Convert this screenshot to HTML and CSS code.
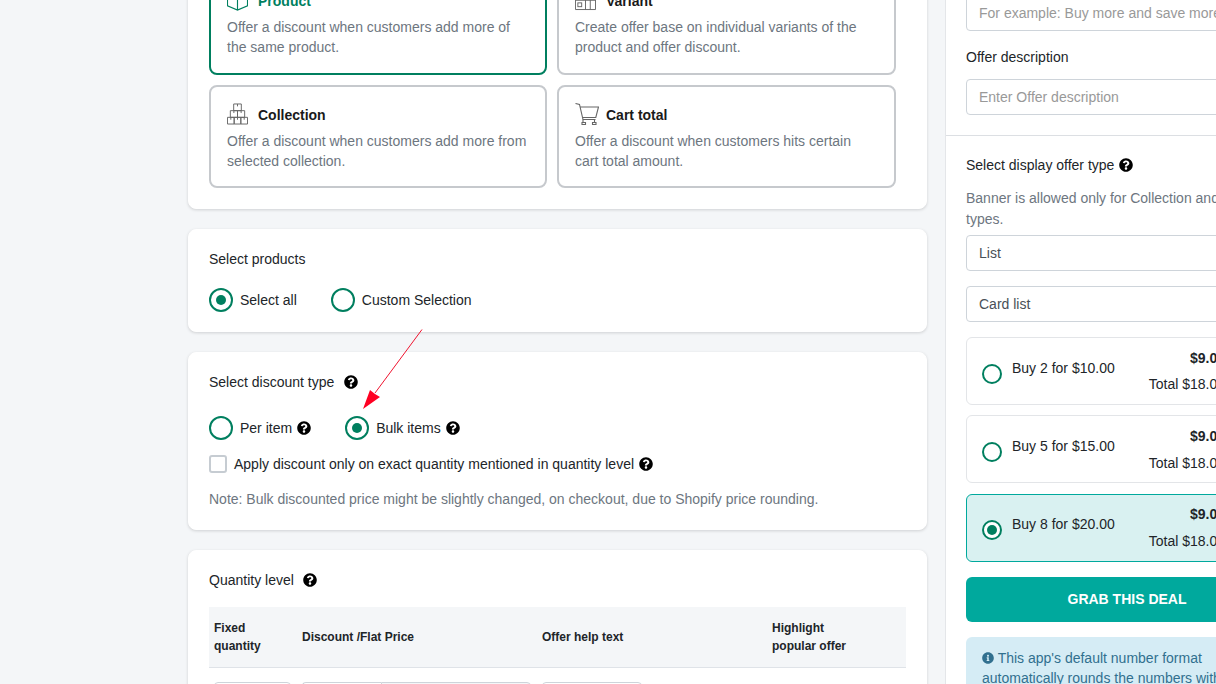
FILE: index.html
```html
<!DOCTYPE html>
<html lang="en">
<head>
<meta charset="utf-8">
<title>Offer settings</title>
<link rel="stylesheet" href="styles.css">
</head>
<body>
<svg class="defs" width="0" height="0" aria-hidden="true">
  <symbol id="help" viewBox="0 0 512 512"><path d="M504 256c0 136.997-111.043 248-248 248S8 392.997 8 256C8 119.083 119.043 8 256 8s248 111.083 248 248zM262.655 90c-54.497 0-89.255 22.957-116.549 63.758-3.536 5.286-2.353 12.415 2.715 16.258l34.699 26.31c5.205 3.947 12.621 3.008 16.665-2.122 17.864-22.658 30.113-35.797 57.303-35.797 20.429 0 45.698 13.148 45.698 32.958 0 14.976-12.363 22.667-32.534 33.976C247.128 238.528 216 254.941 216 296v4c0 6.627 5.373 12 12 12h56c6.627 0 12-5.373 12-12v-1.333c0-28.462 83.186-29.647 83.186-106.667 0-58.002-60.165-102-116.531-102zM256 338c-25.365 0-46 20.635-46 46 0 25.364 20.635 46 46 46s46-20.636 46-46c0-25.365-20.635-46-46-46z"/></symbol>
  <symbol id="info" viewBox="0 0 512 512"><path d="M256 8C119.043 8 8 119.083 8 256c0 136.997 111.043 248 248 248s248-111.003 248-248C504 119.083 392.957 8 256 8zm0 110c23.196 0 42 18.804 42 42s-18.804 42-42 42-42-18.804-42-42 18.804-42 42-42zm56 254c0 6.627-5.373 12-12 12h-88c-6.627 0-12-5.373-12-12v-24c0-6.627 5.373-12 12-12h12v-64h-12c-6.627 0-12-5.373-12-12v-24c0-6.627 5.373-12 12-12h64c6.627 0 12 5.373 12 12v100h12c6.627 0 12 5.373 12 12v24z"/></symbol>
</svg>

<div class="page">
  <main class="left">
    <section class="card">
      <div class="options">
        <div class="option selected">
          <div class="option-head">
            <svg class="option-icon" viewBox="0 0 22 22"><path d="M11 1 21.5 6V17L11 21.5.5 17V6ZM.5 6 11 10.5 21.5 6M11 10.5V21.5M11 10.5V14"/></svg>
            <strong>Product</strong>
          </div>
          <p>Offer a discount when customers add more of the same product.</p>
        </div>
        <div class="option">
          <div class="option-head">
            <svg class="option-icon" viewBox="0 0 22 22"><path d="M4 1H18L21.5 6V11H.5V6ZM.5 11H21.5V21H.5ZM11 11V21M16 11V21"/><rect x="3" y="14" width="4" height="4"/></svg>
            <strong>Variant</strong>
          </div>
          <p>Create offer base on individual variants of the product and offer discount.</p>
        </div>
        <div class="option">
          <div class="option-head">
            <svg class="option-icon" viewBox="0 0 22 22"><path d="M7 .5H15V7.5H7ZM3.5 7.5H11V14.5H3.5ZM11 7.5H18.5V14.5H11ZM.5 14.5H7.5V21.5H.5ZM7.5 14.5H14.5V21.5H7.5ZM14.5 14.5H21.5V21.5H14.5ZM11 .5V3M7.2 7.5V10M14.8 7.5V10M4 14.5V17M11 14.5V17M18 14.5V17"/></svg>
            <strong>Collection</strong>
          </div>
          <p>Offer a discount when customers add more from selected collection.</p>
        </div>
        <div class="option">
          <div class="option-head">
            <svg class="option-icon cart" viewBox="0 0 24 22"><path d="M.5 .5 4.5 1.5 8 16.5H20.5M5.2 4H23.5L20.8 14.5H7.5"/><path d="M8 16.5V19.5M19.5 16.5V19.5M7 19.5H10.5V21.5H7ZM17.5 19.5H21V21.5H17.5Z"/></svg>
            <strong>Cart total</strong>
          </div>
          <p>Offer a discount when customers hits certain cart total amount.</p>
        </div>
      </div>
    </section>

    <section class="card products-card">
      <div class="title">Select products</div>
      <div class="radio-row products">
        <label class="radio-item"><span class="radio on"></span>Select all</label>
        <label class="radio-item"><span class="radio"></span>Custom Selection</label>
      </div>
    </section>

    <section class="card">
      <div class="title with-help">Select discount type <svg class="help"><use href="#help"/></svg></div>
      <div class="radio-row discount">
        <label class="radio-item"><span class="radio"></span>Per item <svg class="help"><use href="#help"/></svg></label>
        <label class="radio-item"><span class="radio on"></span>Bulk items <svg class="help"><use href="#help"/></svg></label>
      </div>
      <label class="check-row"><span class="checkbox"></span>Apply discount only on exact quantity mentioned in quantity level <svg class="help"><use href="#help"/></svg></label>
      <p class="note">Note: Bulk discounted price might be slightly changed, on checkout, due to Shopify price rounding.</p>
    </section>

    <section class="card">
      <div class="title with-help qty">Quantity level <svg class="help"><use href="#help"/></svg></div>
      <div class="table-head">
        <div>Fixed<br>quantity</div>
        <div>Discount /Flat Price</div>
        <div>Offer help text</div>
        <div>Highlight<br>popular offer</div>
      </div>
      <div class="table-row">
        <div class="cell-box qty-box"></div>
        <div class="cell-split"><div class="cell-box"></div><div class="cell-box shaded"></div></div>
        <div class="cell-box help-box"></div>
      </div>
    </section>
  </main>

  <aside class="panel">
    <div class="panel-top">
      <div class="field-label">Offer title</div>
      <input class="field" placeholder="For example: Buy more and save more">
      <div class="field-label second">Offer description</div>
      <input class="field" placeholder="Enter Offer description">
    </div>
    <div class="panel-body">
      <div class="display-title">Select display offer type <svg class="help"><use href="#help"/></svg></div>
      <p class="banner-note">Banner is allowed only for Collection and Cart total<br>types.</p>
      <div class="field value">List</div>
      <div class="field value">Card list</div>

      <div class="offer">
        <span class="radio small"></span>
        <span class="offer-name">Buy 2 for $10.00</span>
        <div class="offer-price"><b>$9.00</b><span>Total $18.00</span></div>
      </div>
      <div class="offer">
        <span class="radio small"></span>
        <span class="offer-name">Buy 5 for $15.00</span>
        <div class="offer-price"><b>$9.00</b><span>Total $18.00</span></div>
      </div>
      <div class="offer active">
        <span class="radio small on"></span>
        <span class="offer-name">Buy 8 for $20.00</span>
        <div class="offer-price"><b>$9.00</b><span>Total $18.00</span></div>
      </div>

      <button class="grab" type="button">GRAB THIS DEAL</button>

      <div class="notice"><svg class="info"><use href="#info"/></svg> This app's default number format automatically rounds the numbers with decimals.</div>
    </div>
  </aside>
</div>

<svg class="arrow" viewBox="0 0 70 90" width="70" height="90" aria-hidden="true">
  <path class="arrow-line" d="M62 .5 15 64"/>
  <path class="arrow-head" d="M3 80 10 61 15 65 20 68Z"/>
</svg>
</body>
</html>
```

FILE: styles.css
```css
* { box-sizing: border-box; }

html, body {
  margin: 0;
  height: 684px;
  overflow: hidden;
}

body {
  position: relative;
  background: #f4f6f8;
  color: #212529;
  font-family: "Liberation Sans", Arial, sans-serif;
  font-size: 14px;
  line-height: 20px;
}

.defs { position: absolute; }

p { margin: 0; }

.page {
  display: flex;
  align-items: flex-start;
  gap: 18px;
  width: 1400px;
  margin-top: -50px;
  padding-left: 188px;
}

.left {
  display: flex;
  flex-direction: column;
  gap: 20px;
  width: 739px;
  flex: none;
}

.card {
  background: #fff;
  border: 1px solid #fff;
  border-radius: 8px;
  box-shadow: 0 1px 3px rgba(63, 63, 68, .2);
  padding: 20px;
}

.products-card { padding-bottom: 19px; }

.options {
  display: grid;
  grid-template-columns: 338px 339px;
  grid-template-rows: 104px 103px;
  gap: 10px;
}

.option {
  border: 2px solid #c6c9cd;
  border-radius: 8px;
  padding: 16px 16px 15px;
  color: #6d7680;
}

.option.selected { border-color: #007f5f; }

.option-head {
  display: flex;
  align-items: center;
  gap: 10px;
  height: 24px;
  margin-bottom: 4px;
  color: #1a1a1a;
}

.option.selected .option-head { color: #007f5f; }

.option-icon {
  width: 21px;
  height: 22px;
  flex: none;
  align-self: flex-start;
  fill: none;
  stroke: #666;
  stroke-width: 1;
}

.option-icon.cart {
  width: 24px;
  margin-right: -3px;
  stroke-width: 1.1;
}

.option.selected .option-icon { stroke: #007f5f; stroke-width: 1.2; }

.title { height: 20px; margin-top: -1px; }

.with-help { display: flex; align-items: center; gap: 10px; }

.help {
  width: 14px;
  height: 14px;
  flex: none;
  fill: #000;
  vertical-align: -2px;
}

.radio-row { display: flex; }

.radio-item {
  display: flex;
  align-items: center;
  gap: 7px;
}

.products { gap: 34px; margin-top: 19px; }

.discount { gap: 34px; margin-top: 24px; }

.discount .help { margin-left: -2px; }

.radio {
  display: flex;
  align-items: center;
  justify-content: center;
  width: 24px;
  height: 24px;
  flex: none;
  border: 2px solid #007f5f;
  border-radius: 50%;
  background: #fff;
}

.radio.on::after {
  content: "";
  width: 10px;
  height: 10px;
  border-radius: 50%;
  background: #007f5f;
}

.radio.small { width: 20px; height: 20px; margin-top: 16px; }

.check-row {
  display: flex;
  align-items: center;
  gap: 7px;
  margin-top: 14px;
}

.check-row .help { margin-left: -2px; }

.checkbox {
  width: 18px;
  height: 18px;
  border: 2px solid #c6ccd2;
  border-radius: 3px;
  background: #fff;
}

.note { margin-top: 15px; color: #6d7680; }

.qty { gap: 9px; margin-bottom: 17px; }

.table-head,
.table-row {
  display: grid;
  grid-template-columns: 88px 240px 230px 139px;
}

.table-head {
  align-items: center;
  height: 61px;
  background: #f4f6f8;
  border-bottom: 1px solid #dfe3e8;
  color: #212529;
  font-size: 12px;
  font-weight: 700;
  line-height: 18px;
}

.table-head > div { padding-left: 5px; }

.table-row { margin-top: 14px; padding-left: 5px; }

.cell-box {
  height: 36px;
  border: 1px solid #ced4da;
  border-radius: 4px;
  background: #fff;
}

.qty-box { width: 77px; }

.cell-split {
  display: grid;
  grid-template-columns: 79px 150px;
}

.cell-split .cell-box:first-child { border-radius: 4px 0 0 4px; border-right: 0; }

.cell-split .cell-box.shaded { border-radius: 0 4px 4px 0; background: #f4f6f8; }

.help-box { width: 100px; }

.panel {
  flex: none;
  width: 364px;
  min-height: 900px;
  background: #fff;
  border-left: 1px solid #e4e6e9;
}

.panel-top {
  padding: 13px 21px 20px 20px;
  border-bottom: 1px solid #dcdfe3;
}

.field-label { height: 20px; margin-bottom: 12px; }

.field-label.second { margin-top: 16px; }

.field {
  display: block;
  width: 322px;
  height: 36px;
  padding: 0 12px;
  border: 1px solid #ced4da;
  border-radius: 4px;
  background: #fff;
  color: #495057;
  font: 14px/34px "Liberation Sans", Arial, sans-serif;
}

.field::placeholder { color: #999; opacity: 1; }

.panel-body { padding: 19px 21px 20px 20px; }

.display-title { height: 20px; }

.display-title .help { margin-left: 1px; }

.banner-note {
  margin: 13px 0 5px;
  color: #6d7680;
  line-height: 21px;
}

.field.value + .field.value { margin-top: 15px; }

.offer {
  display: flex;
  align-items: flex-start;
  width: 322px;
  height: 68px;
  margin-top: 10px;
  padding: 10px 62px 0 15px;
  border: 1px solid #e3e5e8;
  border-radius: 6px;
  background: #fff;
}

.field.value + .offer { margin-top: 15px; }

.offer-name { margin: 10px 0 0 10px; }

.offer-price {
  display: flex;
  flex-direction: column;
  align-items: flex-end;
  gap: 6px;
  margin-left: auto;
}

.offer + .offer .offer-price { gap: 7px; }

.offer.active {
  margin-top: 11px;
  padding-top: 9px;
  background: #d9f1f1;
  border-color: #00a99d;
}

.grab {
  display: block;
  width: 322px;
  height: 45px;
  margin-top: 15px;
  padding: 0 0 2px;
  border: 0;
  border-radius: 6px;
  background: #00a99d;
  color: #fff;
  font: 700 14px "Liberation Sans", Arial, sans-serif;
}

.notice {
  width: 322px;
  margin-top: 15px;
  padding: 11px 16px;
  border-radius: 6px;
  background: #d5ecf5;
  color: #31708f;
}

.info {
  width: 12px;
  height: 14px;
  fill: #31708f;
  vertical-align: -2px;
}

.arrow {
  position: absolute;
  left: 360px;
  top: 329px;
  overflow: visible;
}

.arrow-line { fill: none; stroke: #f0142f; stroke-width: 1; }

.arrow-head { fill: #ff0022; }
```
